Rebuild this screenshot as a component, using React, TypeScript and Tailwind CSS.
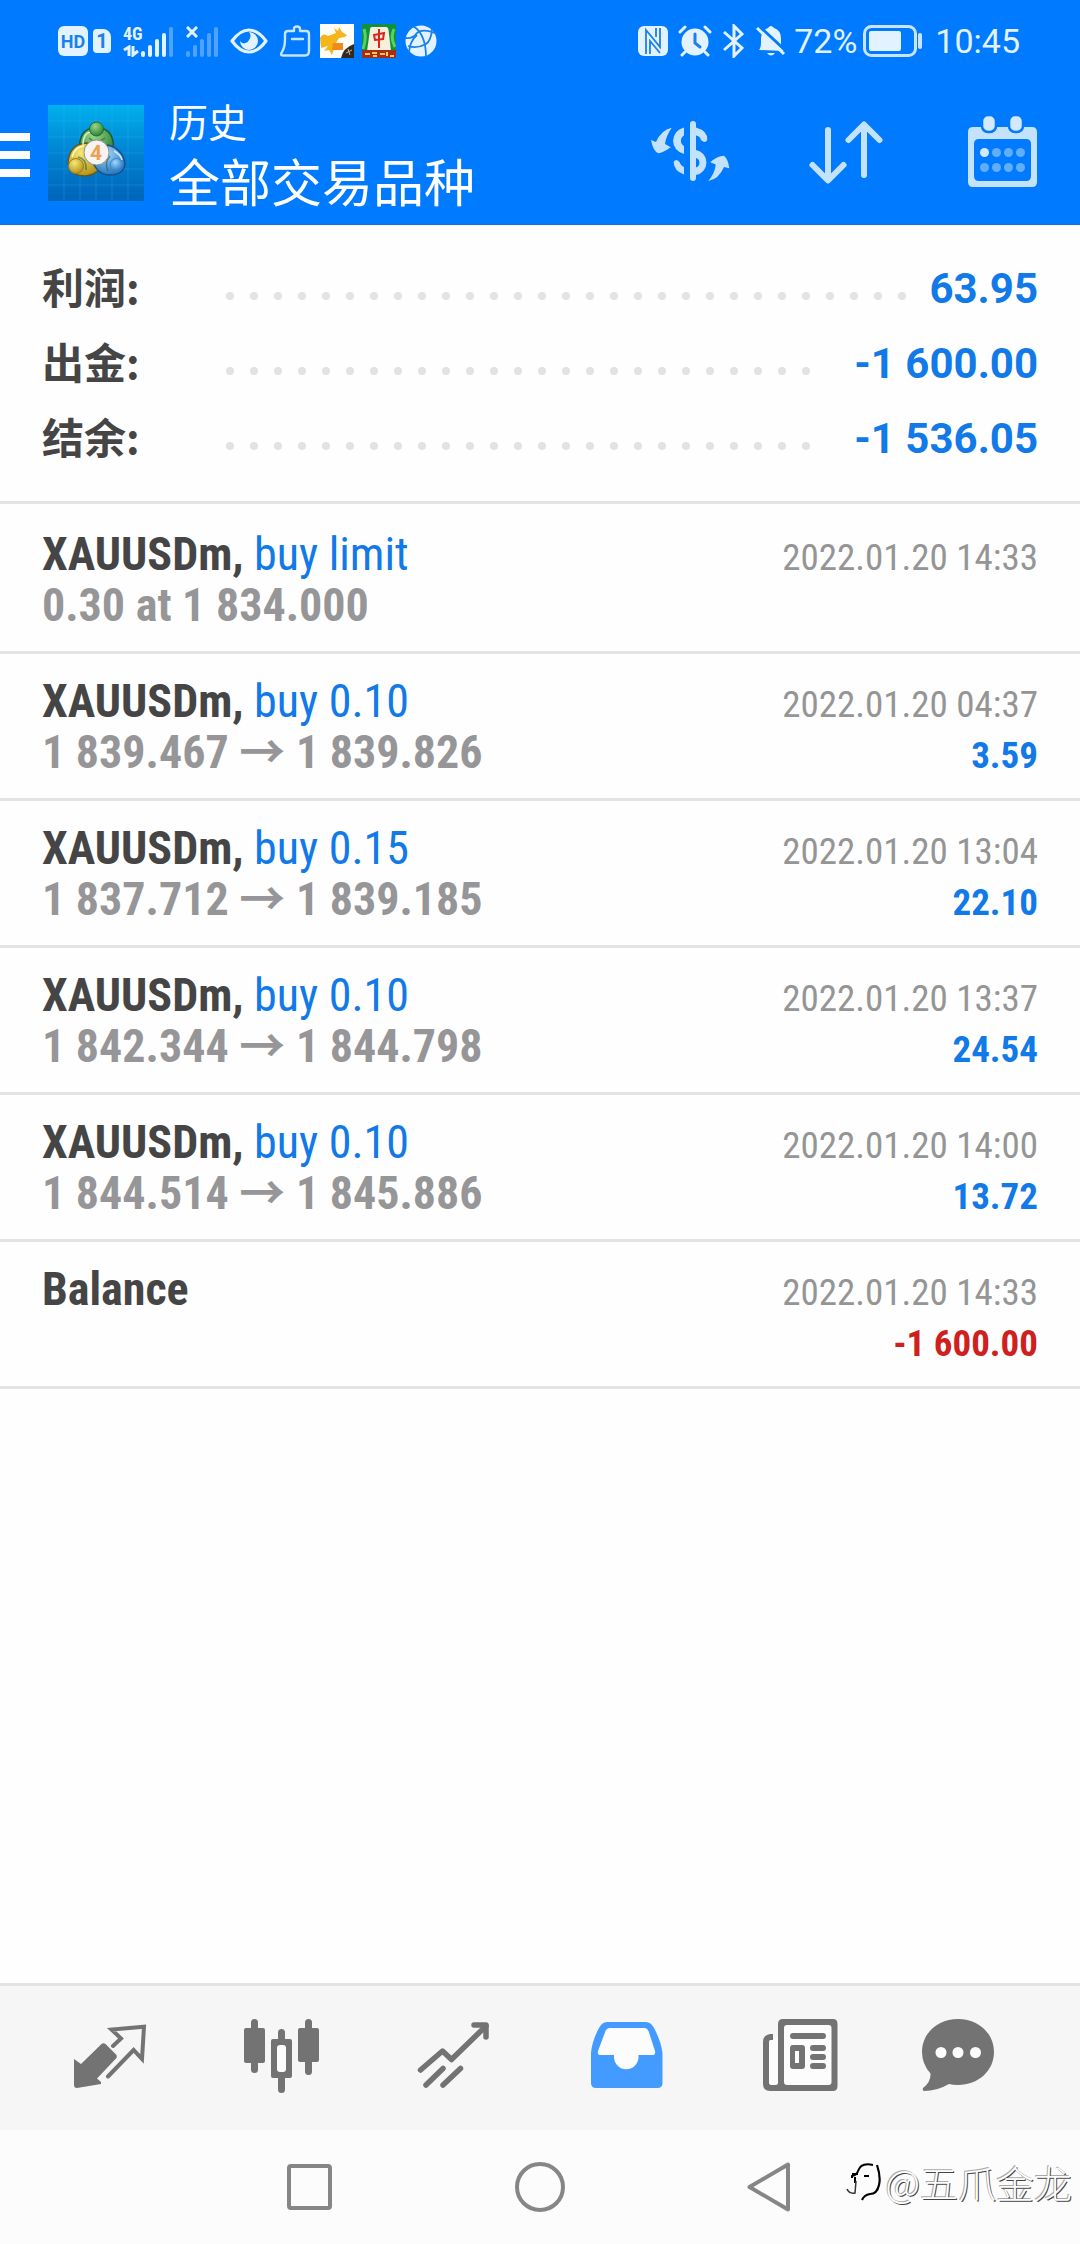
import type { ReactNode } from 'react'

type Deal = {
  symbol: string
  action?: string
  detail?: string
  time: string
  profit?: string
  loss?: boolean
}

const summary = [
  { label: '利润:', value: '63.95' },
  { label: '出金:', value: '-1 600.00' },
  { label: '结余:', value: '-1 536.05' },
]

const deals: Deal[] = [
  { symbol: 'XAUUSDm,', action: 'buy limit', detail: '0.30 at 1 834.000', time: '2022.01.20 14:33' },
  { symbol: 'XAUUSDm,', action: 'buy 0.10', detail: '1 839.467 → 1 839.826', time: '2022.01.20 04:37', profit: '3.59' },
  { symbol: 'XAUUSDm,', action: 'buy 0.15', detail: '1 837.712 → 1 839.185', time: '2022.01.20 13:04', profit: '22.10' },
  { symbol: 'XAUUSDm,', action: 'buy 0.10', detail: '1 842.344 → 1 844.798', time: '2022.01.20 13:37', profit: '24.54' },
  { symbol: 'XAUUSDm,', action: 'buy 0.10', detail: '1 844.514 → 1 845.886', time: '2022.01.20 14:00', profit: '13.72' },
  { symbol: 'Balance', time: '2022.01.20 14:33', profit: '-1 600.00', loss: true },
]

function Signal({ off = false }: { off?: boolean }) {
  return (
    <svg viewBox="0 0 33 31" className="h-[31px] w-[33px]" fill="#e3f2ff">
      <g fillOpacity={off ? 0.35 : 1}>
        <rect x="0" y="25" width="4" height="6" rx="2" />
        <rect x="7" y="19" width="4" height="12" rx="2" />
        <rect x="14" y="13" width="4" height="18" rx="2" />
        <rect x="21" y="7" width="4" height="24" rx="2" />
      </g>
      <rect x="28" y="1" width="4" height="30" rx="2" fillOpacity="0.35" />
    </svg>
  )
}

function StatusBar() {
  return (
    <div className="flex h-[82px] items-center justify-between pr-[60px] pl-[58px] font-[Roboto,sans-serif] text-[#e3f2ff]">
      <div className="flex items-center">
        <span className="flex h-[30px] w-[30px] items-center justify-center rounded-[6px] bg-[#e3f2ff] text-[18px] font-bold text-[#1a80ee]">HD</span>
        <span className="ml-[5px] flex h-6 w-[18px] items-center justify-center rounded-[4px] rounded-tr-[8px] bg-[#e3f2ff] text-[20px] font-bold text-[#1a80ee]">1</span>
        <span className="ml-3 flex h-8 w-[18px] flex-col">
          <span className="font-['Roboto_Condensed',Roboto,sans-serif] text-[18px] leading-[18px] font-bold">4G</span>
          <svg viewBox="0 0 16 12" className="mt-0.5 h-3 w-4" fill="none" stroke="#e3f2ff" strokeWidth="3">
            <path d="M1 5 L6 2 V11 M10 1 V10 L15 6" />
          </svg>
        </span>
        <Signal />
        <span className="relative ml-3">
          <Signal off />
          <svg viewBox="0 0 12 12" className="absolute top-0 left-0 h-3 w-3" stroke="#e3f2ff" strokeWidth="3">
            <path d="M1 1 L11 11 M11 1 L1 11" />
          </svg>
        </span>
        <svg viewBox="0 0 38 28" className="ml-[11px] h-7 w-[38px]">
          <path d="M2 14 Q10 3 19 3 T36 14 Q28 25 19 25 T2 14 Z" fill="none" stroke="#e3f2ff" strokeWidth="3.2" strokeLinejoin="round" />
          <path d="M19 5 a9 9 0 1 1 -9 9 a5 5 0 0 0 9 -1 a6 6 0 0 0 0 -8 Z" fill="#e3f2ff" />
        </svg>
        <svg viewBox="0 0 32 32" className="ml-[11px] h-8 w-8" fill="none" stroke="#c9e4ff" strokeWidth="2.4" strokeLinejoin="round" strokeLinecap="round">
          <path d="M15 6 V4 Q15 1.500 18 1.500 T21 4 V6 H27 Q30 6 30 9 V26 Q30 30.500 26 30.500 H4 Q0.500 30.500 3 27 Q6 22 6 14 V9 Q6 6 9 6 Z M13 14 H24" />
        </svg>
        <svg viewBox="0 0 34 34" className="ml-[9px] h-[34px] w-[34px]">
          <rect width="34" height="34" fill="#fffdf8" />
          <path d="M0 14 Q3 8 8 12 L16 9 L14 4 L18 7 L19 3 L22 8 L27 11 L25 13 L19 14 L16 19 Q14 25 12 31 L9 26 L4 27 L8 22 L1 24 Z" fill="#f5b51b" />
          <path d="M13 19 H23 V26 H12 Z" fill="#f08a1c" />
          <path d="M34 20 V34 H21 Q23 24 34 20 Z" fill="#35291f" />
          <path d="M26 29 L32 26 M28 25 L30 31" stroke="#c9b89a" />
        </svg>
        <svg viewBox="0 0 34 34" className="ml-2 h-[34px] w-[34px]">
          <rect width="34" height="34" fill="#12913a" />
          <path d="M2 5 Q5 14 1 25 M32 5 Q28 14 33 23" stroke="#57d264" strokeWidth="3" fill="none" />
          <path d="M10 3 H24 Q26 3 26.500 6 L29 27 H5 L8 6 Q8 3 10 3 Z" fill="#f7eedd" />
          <path d="M12 11 L22 9 L21 15 L13 16 Z M17 5 V24" stroke="#d5261c" strokeWidth="2" fill="none" />
          <rect y="26" width="34" height="8" fill="#a72d17" />
          <path d="M3 30 H8 M10 29 H15 M11 32 H15 M18 30 H23 M25 28 V32 M28 32 H32" stroke="#ffc95e" strokeWidth="2" />
        </svg>
        <svg viewBox="0 0 32 32" className="ml-[9px] h-8 w-8">
          <circle cx="16" cy="16" r="15.500" fill="#e3f2ff" />
          <path d="M8 1 Q21 9 21 32 M0 13 Q8 14 12 8 Q18 3 32 9 M12 10 Q5 16 4 27 M3 21 Q12 24 21 19 Q26 16 27 4" stroke="#1a80ee" strokeWidth="1.800" fill="none" />
        </svg>
      </div>
      <div className="flex items-center">
        <svg viewBox="0 0 30 30" className="h-[30px] w-[30px]">
          <rect width="30" height="30" rx="6" fill="#e3f2ff" />
          <path d="M8 28 V4 L22 21 V2 M12 28 V15 L22 27 M18 2 V11" stroke="#1a80ee" strokeWidth="1.800" fill="none" />
        </svg>
        <svg viewBox="0 0 34 32" className="ml-[10px] h-8 w-[34px]" strokeLinecap="round">
          <circle cx="17" cy="17" r="13.500" fill="#e3f2ff" />
          <path d="M2 7 L7 2 M32 7 L27 2 M7 27 L4 30 M27 27 L30 30" stroke="#e3f2ff" strokeWidth="3" />
          <path d="M17 9 V18 L22 22" stroke="#1a80ee" strokeWidth="3" fill="none" />
        </svg>
        <svg viewBox="0 0 22 34" className="ml-[10px] h-[34px] w-[22px]" fill="none" stroke="#e3f2ff" strokeWidth="3">
          <path d="M2 8 L20 24 L12 32 V2 L20 10 L2 26" />
        </svg>
        <svg viewBox="0 0 30 32" className="ml-3 h-8 w-[30px]">
          <path d="M3 25 Q5 23 5 17 V13 Q6 5 12 3 Q15 -1 18 3 Q25 5 25 14 V19 Q25 23 28 26 Z M11 28 H19 Q15 33 11 28 Z" fill="#e3f2ff" />
          <path d="M3 1 L31 27" stroke="#007aff" strokeWidth="3" />
          <path d="M1 3 L28 29" stroke="#e3f2ff" strokeWidth="3" />
        </svg>
        <span className="ml-2 text-[34px] leading-10">72%</span>
        <svg viewBox="0 0 60 32" className="ml-1.5 h-8 w-[60px]">
          <rect x="1.500" y="1.500" width="51" height="29" rx="7" fill="none" stroke="#c9e4ff" strokeWidth="3" />
          <rect x="6" y="6" width="32" height="20" rx="2" fill="#e3f2ff" />
          <rect x="55" y="8" width="4" height="16" rx="2" fill="#c9e4ff" />
        </svg>
        <span className="ml-3 text-[34px] leading-10">10:45</span>
      </div>
    </div>
  )
}

function AppLogo() {
  return (
    <svg viewBox="0 0 96 96" className="ml-[18px] h-24 w-24 shrink-0">
      <defs>
        <linearGradient id="sky" x1="0" y1="0" x2="0" y2="1">
          <stop offset="0" stopColor="#00b0ee" />
          <stop offset="0.500" stopColor="#0083d2" />
          <stop offset="1" stopColor="#0064bb" />
        </linearGradient>
        <radialGradient id="green" cx="0.400" cy="0.300" r="0.700">
          <stop offset="0" stopColor="#9bd58a" />
          <stop offset="1" stopColor="#2c8433" />
        </radialGradient>
        <radialGradient id="gold" cx="0.400" cy="0.300" r="0.700">
          <stop offset="0" stopColor="#f6e878" />
          <stop offset="1" stopColor="#b8941a" />
        </radialGradient>
        <radialGradient id="blue" cx="0.400" cy="0.300" r="0.700">
          <stop offset="0" stopColor="#a2d8fb" />
          <stop offset="1" stopColor="#2476c2" />
        </radialGradient>
      </defs>
      <rect width="96" height="96" fill="url(#sky)" />
      <path d="M16 0 V96 M32 0 V96 M48 0 V96 M64 0 V96 M80 0 V96 M0 16 H96 M0 32 H96 M0 48 H96 M0 64 H96 M0 80 H96" stroke="#5fc4f5" strokeOpacity="0.200" />
      <g strokeWidth="1.500">
        <path d="M32 47 Q29 24 48.500 22 Q68 24 65 47 L57 52 H38 Z" fill="url(#green)" stroke="#1b5a3a" />
        <path d="M40 38 Q22 38 20 57 Q21 71 38 71 Q47 70 52 63 L42 52 Z" fill="url(#gold)" stroke="#5d5a26" />
        <path d="M60 40 Q75 44 77 59 Q75 71 60 70 Q51 69 46 60 L55 55 Z" fill="url(#blue)" stroke="#1c4f85" />
      </g>
      <g fill="none" strokeWidth="1.500">
        <path d="M35 40 Q35 28 43 27" stroke="#d2f2c2" />
        <path d="M24 52 Q27 42 36 41" stroke="#fff7b8" />
        <path d="M66 46 Q73 50 74 55" stroke="#cfeaff" />
        <path d="M41 33 Q48 40 57 33 M30 52 Q39 54 38 65 M62 51 Q56 58 60 66" stroke="#2a5a46" strokeOpacity="0.600" />
      </g>
      <circle cx="48.500" cy="24" r="7" fill="url(#green)" stroke="#256b31" />
      <circle cx="28" cy="61" r="7.500" fill="url(#gold)" stroke="#9b7c1d" />
      <circle cx="68.500" cy="60" r="6.500" fill="url(#blue)" stroke="#3a86c9" />
      <circle cx="48.500" cy="47.500" r="12.500" fill="#f6f4f2" stroke="#8c9488" />
      <text x="48" y="55" textAnchor="middle" fontFamily="Roboto, sans-serif" fontSize="21" fontWeight="700" fill="#f0a050">4</text>
    </svg>
  )
}

function ActionButton({ label, children }: { label: string; children: ReactNode }) {
  return (
    <button type="button" aria-label={label} className="flex h-full w-[156px] items-center justify-center">
      <svg viewBox="0 0 96 96" className="h-24 w-24" fill="none">{children}</svg>
    </button>
  )
}

function Header() {
  return (
    <header className="flex h-[143px] items-center border-b border-[#1a70cf] text-white">
      <button type="button" aria-label="菜单" className="mt-1 flex w-[30px] shrink-0 flex-col gap-[10px]">
        <span className="h-2 bg-white" />
        <span className="h-2 bg-white" />
        <span className="h-2 bg-white" />
      </button>
      <AppLogo />
      <div className="ml-[25px] flex-1 pb-[6px] font-['Noto_Sans_CJK_SC',sans-serif]">
        <div className="text-[39px] leading-[60px]">历史</div>
        <h1 className="text-[51px] leading-[60px]">全部交易品种</h1>
      </div>
      <ActionButton label="交易品种">
        <g fill="#c5e2fc">
          <rect x="48" y="16" width="6" height="60" rx="3" />
          <path d="M42 22.500 A13.500 13.500 0 0 0 42 49 V41 A6 6 0 0 1 42 30.500 Z" />
          <path d="M54 45 A12.700 12.700 0 0 1 54 70 V62.500 A5 5 0 0 0 54 53 Z" />
          <path d="M9 35 L14 37 Q19 25 29.700 22.700 Q24 31 23 39 L28.700 42.300 Q21 48 16.300 48.300 Q11 46 9 35 Z" />
          <path d="M87.300 63.300 L82 62 Q77 74 66.300 76 Q73 68 73.700 59.500 L68.300 57.300 Q75 51 82 50.700 Q86 54 87.300 63.300 Z" />
          <path d="M54 22.500 Q66 26 65.300 35 Q63 39 59 35 Q58 31 54 30.500 Z" />
          <path d="M42 69.500 Q32 66 31.600 57 Q34 53 37.500 57 Q39 61 42 62 Z" />
        </g>
      </ActionButton>
      <ActionButton label="排序">
        <g stroke="#c5e2fc" strokeWidth="6" strokeLinecap="round" strokeLinejoin="round">
          <path d="M30 25 V75 M14.500 60 L30 75.500 L45.500 60" />
          <path d="M66 70 V20 M50.500 35 L66 19.500 L81.500 35" />
        </g>
      </ActionButton>
      <ActionButton label="日期">
        <path fillRule="evenodd" fill="#c5e2fc" d="M19 22 H78 Q83 22 83 27 V77 Q83 82 78 82 H19 Q14 82 14 77 V27 Q14 22 19 22 Z M25 34 Q20 34 20 39 V71 Q20 76 25 76 H72 Q77 76 77 71 V39 Q77 34 72 34 Z" />
        <g fill="#d3e9fd" stroke="#007aff" strokeWidth="2.500">
          <rect x="28" y="10" width="14" height="17" rx="6" />
          <rect x="55" y="10" width="14" height="17" rx="6" />
        </g>
        <circle cx="30.500" cy="47.500" r="4.500" fill="#d3e9fd" />
        <g fill="#62aefe">
          <circle cx="42.500" cy="47.500" r="4.500" />
          <circle cx="54.500" cy="47.500" r="4.500" />
          <circle cx="66.500" cy="47.500" r="4.500" />
          <circle cx="30.500" cy="62.500" r="4.500" />
          <circle cx="42.500" cy="62.500" r="4.500" />
          <circle cx="54.500" cy="62.500" r="4.500" />
          <circle cx="66.500" cy="62.500" r="4.500" />
        </g>
      </ActionButton>
    </header>
  )
}

function Summary() {
  return (
    <dl className="mb-[3px] border-b-[3px] border-[#e3e3e3] px-[42px] pt-[25px] pb-[26px]">
      {summary.map((row) => (
        <div key={row.label} className="flex h-[75px] items-center">
          <dt className="w-[184px] shrink-0 pb-1 font-['Noto_Sans_CJK_SC',sans-serif] text-[42px] leading-[60px] font-bold text-[#454545]">
            {row.label}
          </dt>
          <div className="mt-4 flex h-2 flex-1 flex-wrap gap-4 overflow-hidden" aria-hidden="true">
            {Array.from({ length: 60 }, (_, i) => (
              <span key={i} className="h-2 w-2 rounded-full bg-[#e2e2e2]" />
            ))}
          </div>
          <dd className="ml-[22px] shrink-0 pt-[2px] font-[Roboto,sans-serif] text-[42px] leading-[60px] font-bold text-[#1179e8]">
            {row.value}
          </dd>
        </div>
      ))}
    </dl>
  )
}

function DealRow({ deal }: { deal: Deal }) {
  return (
    <li className="border-b-[3px] border-[#e3e3e3] px-[42px] pt-[22px] pb-5 text-[46px] leading-[51px]">
      <div className="flex h-[51px] items-baseline justify-between">
        <div>
          <span className="font-bold text-[#454545]">{deal.symbol}</span>{' '}
          <span className="text-[#1179e8]">{deal.action}</span>
        </div>
        <time className="text-[37px] text-[#959595]">{deal.time}</time>
      </div>
      <div className="flex h-[51px] items-baseline justify-between font-bold">
        <span className="text-[#969698]">{deal.detail ?? '\u00a0'}</span>
        <span className={`text-[37px] ${deal.loss ? 'text-[#cf2020]' : 'text-[#1179e8]'}`}>{deal.profit}</span>
      </div>
    </li>
  )
}

function TabButton({ label, children }: { label: string; children: ReactNode }) {
  return (
    <button type="button" aria-label={label} className="flex flex-1 items-center justify-center">
      <svg viewBox="0 0 96 96" className="h-24 w-24 overflow-visible" fill="none">{children}</svg>
    </button>
  )
}

function TabBar() {
  return (
    <nav className="flex h-[147px] border-t-[3px] border-[#e3e3e3] bg-[#f6f6f6] px-6">
      <TabButton label="行情">
        <path d="M12 49 L19 54 L39.500 34 Q41.500 32.500 43.500 34 L54.500 45 Q55.500 47 54 48.500 L35 68.500 L39 72 V74 L15 78 Q12 78 12 75 Z" fill="#737373" />
        <path d="M51 36 L59 28.500 L49.500 19.500 L82 16.700 L80 49 L71.600 40 L46 66.500" stroke="#737373" strokeWidth="4" strokeLinecap="round" />
      </TabButton>
      <TabButton label="图表">
        <g fill="#737373">
          <rect x="17" y="9" width="7" height="54" rx="3.500" />
          <rect x="10" y="18" width="21" height="35" rx="2" />
          <rect x="44" y="19" width="7" height="64" rx="3.500" />
          <rect x="37" y="29" width="21" height="39" rx="2" />
          <rect x="71" y="9" width="7" height="56" rx="3.500" />
          <rect x="64" y="18" width="21" height="34" rx="2" />
        </g>
        <rect x="43" y="35" width="9" height="27" rx="3" fill="#fcfcfc" />
      </TabButton>
      <TabButton label="交易">
        <g stroke="#737373" strokeWidth="5.500" strokeLinecap="round" strokeLinejoin="round">
          <path d="M14.500 60 L36.500 41 L45.500 49.500 L80 16" />
          <path d="M68 15 H80 V27" />
          <path d="M37 58.500 L20 75 M54.500 58.500 L37 75" />
        </g>
      </TabButton>
      <TabButton label="历史">
        <path d="M29 12 H68 Q73 12 76 18 Q83 31 84.500 43 V73 Q84.500 78 79.500 78 H18 Q13 78 13 73 V43 Q14 31 21 18 Q24 12 29 12 Z" fill="#439bff" />
        <path d="M32 18 H66 Q69 18 70.500 21 L77 41 Q78 45 74 45 H60.500 V48 A12.300 12.300 0 0 1 36 48 V45 H23 Q19 45 20 41 L27.500 21 Q29 18 32 18 Z" fill="#fcfcfc" />
      </TabButton>
      <TabButton label="新闻">
        <path d="M33 9 H83 Q87.500 9 87.500 14 V76 Q87.500 81 83 81 H20 Q13 81 13 74 V32 Q13 25 20 24 H23 V30 H21 Q19 30 19 33 V72 Q19 75 22 75 H25 Q28 75 28 72 V14 Q28 9 33 9 Z" fill="#737373" />
        <path d="M22 75 Q19 75 19 72 V33 Q19 30 21 30 H23 L28 27 V72 Q28 75 25 75 Z" fill="#fcfcfc" />
        <rect x="34" y="15" width="47.500" height="60" rx="3" fill="#fcfcfc" />
        <g fill="#737373">
          <rect x="40" y="23" width="36" height="6" rx="3" />
          <rect x="40" y="35" width="15" height="24" rx="3" />
          <rect x="60" y="35" width="16" height="6" rx="3" />
          <rect x="60" y="44" width="16" height="6" rx="3" />
          <rect x="60" y="53" width="16" height="6" rx="3" />
        </g>
        <rect x="45" y="41" width="4" height="12" fill="#fcfcfc" />
      </TabButton>
      <TabButton label="聊天">
        <path d="M36 9 C56 9 72 23 72 42 C72 61 56 75 36 75 Q31 75 27 74 Q15 81 2 81 Q0 80 1 78 Q9 72 8.500 63.500 Q0 54 0 42 C0 23 16 9 36 9 Z" fill="#737373" />
        <circle cx="19" cy="42.500" r="5.500" fill="#fcfcfc" />
        <circle cx="36" cy="42.500" r="5.500" fill="#fcfcfc" />
        <circle cx="53.500" cy="42.500" r="5.500" fill="#fcfcfc" />
      </TabButton>
    </nav>
  )
}

function SystemNav() {
  return (
    <div className="relative flex h-[114px] justify-center bg-[#fcfcfc]">
      <button type="button" aria-label="最近任务" className="flex w-[230px] items-center justify-center">
        <svg viewBox="0 0 52 52" className="h-[52px] w-[52px]" fill="none" stroke="#868686" strokeWidth="4">
          <rect x="5" y="5" width="41" height="42" rx="2" />
        </svg>
      </button>
      <button type="button" aria-label="主页" className="flex w-[230px] items-center justify-center">
        <svg viewBox="0 0 52 52" className="h-[52px] w-[52px]" fill="none" stroke="#868686" strokeWidth="4">
          <circle cx="26" cy="26" r="23" />
        </svg>
      </button>
      <button type="button" aria-label="返回" className="flex w-[230px] items-center justify-center">
        <svg viewBox="0 0 52 52" className="h-[52px] w-[52px]" fill="none" stroke="#868686" strokeWidth="4" strokeLinejoin="round">
          <path d="M44 3.500 V48.500 L5.500 26 Z" />
        </svg>
      </button>
      <div className="absolute top-6 right-2 flex items-center font-['Noto_Sans_CJK_SC',sans-serif] text-[38px] leading-[56px] font-light text-white [text-shadow:1px_1px_0_#444,-1px_-1px_0_#aaa]">
        <svg viewBox="0 0 36 38" className="mr-1 h-[38px] w-9" fill="none">
          <path d="M28 2 Q16 -1 13 8 Q12 12 7 13 V15 M10 14 V20 M13 11 H7 M19 13 H24" stroke="#000" strokeWidth="2" />
          <path d="M2 26 Q4 31 10 30 L11 18" stroke="#333" strokeWidth="1.500" />
          <path d="M32 2 Q36 14 34 22 Q32 31 25 31 Q19 32 17 37" stroke="#000" strokeWidth="2.200" />
        </svg>
        <span>@五爪金龙</span>
      </div>
    </div>
  )
}

function App() {
  return (
    <div className="flex min-h-screen flex-col bg-[#fefefe]">
      <div className="bg-[#007aff]">
        <StatusBar />
        <Header />
      </div>
      <main className="flex-1">
        <Summary />
        <ul className="font-['Roboto_Condensed',Roboto,'Noto_Sans_CJK_SC',sans-serif]">
          {deals.map((deal, i) => (
            <DealRow key={i} deal={deal} />
          ))}
        </ul>
      </main>
      <TabBar />
      <SystemNav />
    </div>
  )
}

export default App
